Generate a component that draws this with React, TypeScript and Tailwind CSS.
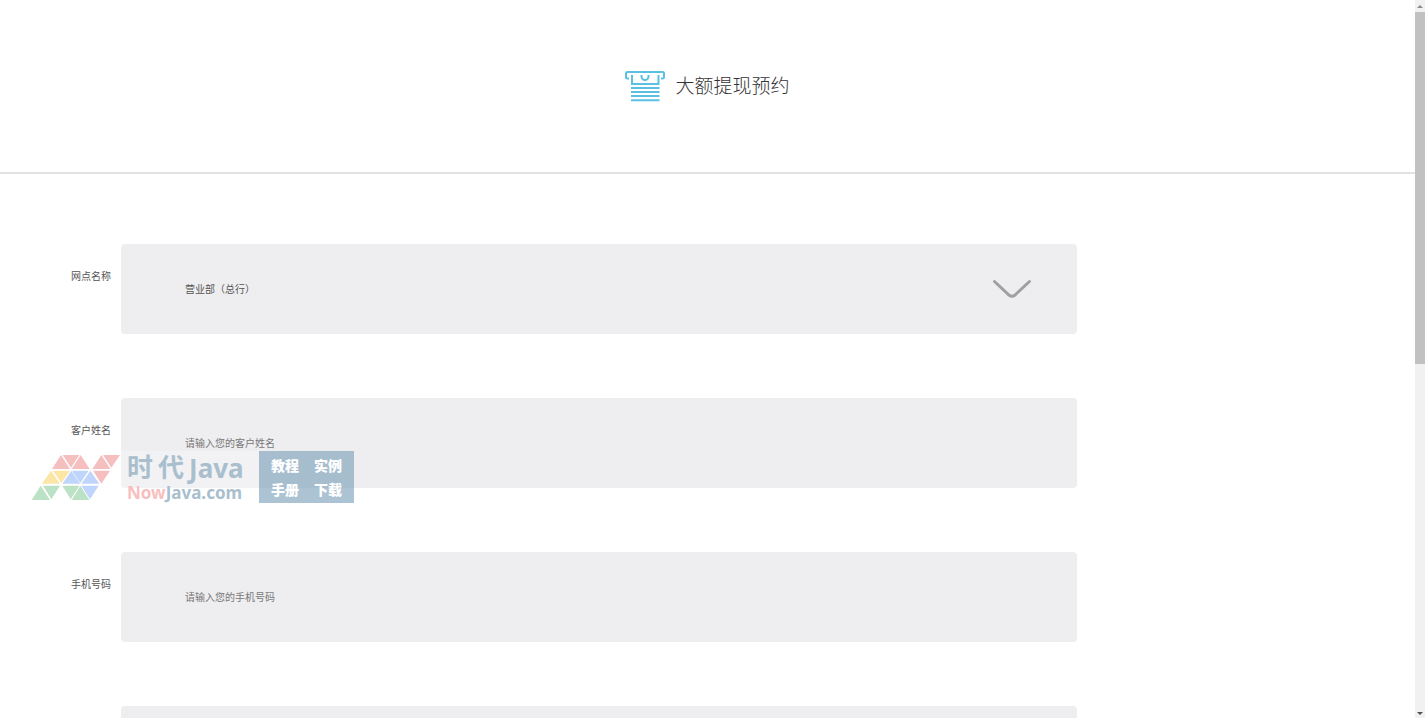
import React from 'react';

interface Field {
  id: string;
  label: string;
  placeholder: string;
}

const fields: Field[] = [
  { id: 'customer', label: '客户姓名', placeholder: '请输入您的客户姓名' },
  { id: 'phone', label: '手机号码', placeholder: '请输入您的手机号码' },
];

const rowClass = 'grid grid-cols-[111px_1fr] gap-[10px]';
const labelClass = 'pt-6 text-right text-[10px] leading-4 text-[#555]';
const controlClass =
  'block h-[90px] w-full appearance-none rounded bg-[#eeeef0] px-16 pb-0.5 text-[10px] text-[#555] outline-none placeholder:text-[#777]';

function WithdrawIcon(): React.JSX.Element {
  return (
    <svg viewBox="0 0 40 32" className="h-8 w-10" fill="none" stroke="#5bc0e2" strokeWidth="2" aria-hidden="true">
      <path d="M4 8.5H2.5Q1 8.5 1 7V3.5Q1 2 2.5 2H37.5Q39 2 39 3.5V7Q39 8.5 37.5 8.5H36" />
      <path d="M7 5V14H33.5V5" />
      <path d="M16.5 5V6.5A3.5 3.5 0 0 0 23.5 6.5V5" />
      <path d="M6 18H34.5M6 22H34.5M6 26H34.5M6 30.3H34.5" />
    </svg>
  );
}

function WatermarkLogo(): React.JSX.Element {
  return (
    <svg viewBox="0 3 279 156" className="h-[52px] w-[93px]" aria-hidden="true">
      <path
        fill="#f6bfbf"
        d="M72 57L99 15L126 57ZM104 15H154L129 53ZM131 57L158 15L185 57ZM193 57L220 15L247 57ZM225 15H276L250 53ZM195 62H246L220 101Z"
      />
      <path fill="#fbe6a6" d="M42 101L69 62L96 101ZM75 62H126L100 99Z" />
      <path fill="#bfd5fb" d="M103 101L130 62L157 101ZM132 62H182L157 99ZM160 101L187 62L214 101ZM160 107H212L186 148Z" />
      <path fill="#bbe2c5" d="M11 150L38 107L66 150ZM45 107H96L70 148ZM103 107H154L128 148ZM131 150L157 107L184 150Z" />
    </svg>
  );
}

function Watermark(): React.JSX.Element {
  return (
    <div className="pointer-events-none absolute top-[451px] left-7 flex h-[52px]">
      <WatermarkLogo />
      <div className="w-[138px] bg-white/25 pl-[6px] font-bold">
        <div className="flex h-[34px] items-center gap-[5px] font-['Liberation_Sans','Noto_Sans_CJK_SC',sans-serif] text-[26px] text-[#a9bfce]">
          <span>时</span>
          <span>代</span>
          <span className="font-['Noto_Sans']">Java</span>
        </div>
        <div className="font-['Noto_Sans'] text-[17px] leading-4 text-[#a9bfce]">
          <span className="text-[#f8bfbf]">Now</span>Java.com
        </div>
      </div>
      <div className="grid w-[95px] grid-cols-2 gap-x-px bg-[#7fa3bb]/65 px-[5px] py-[2px] text-center text-[14px] leading-6 font-black text-white">
        <span>教程</span>
        <span>实例</span>
        <span>手册</span>
        <span>下载</span>
      </div>
    </div>
  );
}

function Scrollbar(): React.JSX.Element {
  return (
    <div className="flex w-[10px] shrink-0 flex-col items-center bg-[#f1f1f1]" aria-hidden="true">
      <svg viewBox="0 0 10 12" className="h-3 w-[10px]" fill="#8a8a8a">
        <path d="M2 8L5 5L8 8Z" />
      </svg>
      <div className="h-[49%] w-full bg-[#c1c1c1]" />
      <svg viewBox="0 0 10 10" className="mt-auto h-[10px] w-[10px]" fill="#505050">
        <path d="M2 4L5 7L8 4Z" />
      </svg>
    </div>
  );
}

function App(): React.JSX.Element {
  return (
    <div className="flex h-screen overflow-hidden bg-white font-['Noto_Sans_CJK_SC',sans-serif]">
      <main className="relative min-w-0 flex-1 overflow-hidden">
        <header className="flex h-[174px] items-center justify-center gap-[10px] border-b-2 border-[#e2e2e2]">
          <WithdrawIcon />
          <h1 className="pb-0.5 text-[19px] font-light text-[#333]">大额提现预约</h1>
        </header>

        <form className="space-y-16 pt-[70px] pr-[338px]">
          <div className={rowClass}>
            <label htmlFor="branch" className={labelClass}>网点名称</label>
            <div className="relative">
              <select id="branch" className={controlClass}>
                <option>营业部（总行）</option>
              </select>
              <svg
                viewBox="0 0 40 20"
                className="pointer-events-none absolute top-[35px] right-[45px] h-5 w-10"
                fill="none"
                stroke="#a0a0a0"
                strokeWidth="3"
                strokeLinecap="round"
                aria-hidden="true"
              >
                <path d="M2.5 2.5L17 16Q20 18.500 23 16L37.500 2.5" />
              </svg>
            </div>
          </div>

          {fields.map((field) => (
            <div key={field.id} className={rowClass}>
              <label htmlFor={field.id} className={labelClass}>{field.label}</label>
              <input id={field.id} type="text" placeholder={field.placeholder} className={controlClass} />
            </div>
          ))}

          <div className={rowClass}>
            <span />
            <input type="text" aria-label="提现金额" className={controlClass} />
          </div>
        </form>

        <Watermark />
      </main>
      <Scrollbar />
    </div>
  );
}

export default App;
